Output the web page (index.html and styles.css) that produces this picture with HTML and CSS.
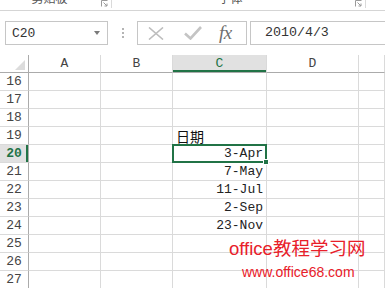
FILE: index.html
```html
<!DOCTYPE html>
<html lang="zh-CN">
  <head>
    <meta charset="UTF-8" />
    <title>日期</title>
    <link rel="stylesheet" href="styles.css">
  </head>
  <body>
    <div class="ribbon-tail">
      <div class="group group-clip">
        <span class="group-label">剪贴板</span>
        <svg class="launcher" width="7" height="7" viewBox="0 0 7 7">
          <path d="M0.5 6.5V0.5H6.5" fill="none" stroke="#9a9a9a" />
          <path d="M2.5 2.5L6 6M6 3.5V6H3.5" fill="none" stroke="#9a9a9a" />
        </svg>
      </div>
      <div class="group group-font">
        <span class="group-label">字体</span>
        <svg class="launcher" width="7" height="7" viewBox="0 0 7 7">
          <path d="M0.5 6.5V0.5H6.5" fill="none" stroke="#9a9a9a" />
          <path d="M2.5 2.5L6 6M6 3.5V6H3.5" fill="none" stroke="#9a9a9a" />
        </svg>
      </div>
    </div>

    <div class="formula-bar">
      <div class="name-box">
        <span>C20</span>
        <span class="caret"></span>
      </div>
      <div class="grip">
        <i></i><i></i><i></i>
      </div>
      <div class="fx-buttons">
        <svg class="btn-cancel" width="16" height="13" viewBox="0 0 16 13">
          <path d="M1 0.5L15 12.5M15 0.5L1 12.5" stroke="#bdbdbd" stroke-width="1.6" fill="none" />
        </svg>
        <svg class="btn-enter" width="18" height="14" viewBox="0 0 18 14">
          <path d="M1 7.5L6.5 12.5L17 1" stroke="#c4c4c4" stroke-width="2.6" fill="none" />
        </svg>
        <span class="fx">fx</span>
      </div>
      <div class="formula-input">2010/4/3</div>
    </div>

    <div class="sheet">
      <div class="grid">
        <div class="corner"><span class="corner-mark"></span></div>
        <div class="col-head">A</div>
        <div class="col-head">B</div>
        <div class="col-head is-active">C</div>
        <div class="col-head">D</div>
        <div class="col-head"></div>

        <div class="row-head">16</div><div class="cell"></div><div class="cell"></div><div class="cell"></div><div class="cell"></div><div class="cell"></div>
        <div class="row-head">17</div><div class="cell"></div><div class="cell"></div><div class="cell"></div><div class="cell"></div><div class="cell"></div>
        <div class="row-head">18</div><div class="cell"></div><div class="cell"></div><div class="cell"></div><div class="cell"></div><div class="cell"></div>
        <div class="row-head">19</div><div class="cell"></div><div class="cell"></div><div class="cell text">日期</div><div class="cell"></div><div class="cell"></div>
        <div class="row-head is-active">20</div><div class="cell"></div><div class="cell"></div><div class="cell date selected">3-Apr<span class="fill-handle"></span></div><div class="cell"></div><div class="cell"></div>
        <div class="row-head">21</div><div class="cell"></div><div class="cell"></div><div class="cell date">7-May</div><div class="cell"></div><div class="cell"></div>
        <div class="row-head">22</div><div class="cell"></div><div class="cell"></div><div class="cell date">11-Jul</div><div class="cell"></div><div class="cell"></div>
        <div class="row-head">23</div><div class="cell"></div><div class="cell"></div><div class="cell date">2-Sep</div><div class="cell"></div><div class="cell"></div>
        <div class="row-head">24</div><div class="cell"></div><div class="cell"></div><div class="cell date">23-Nov</div><div class="cell"></div><div class="cell"></div>
        <div class="row-head">25</div><div class="cell"></div><div class="cell"></div><div class="cell"></div><div class="cell"></div><div class="cell"></div>
        <div class="row-head">26</div><div class="cell"></div><div class="cell"></div><div class="cell"></div><div class="cell"></div><div class="cell"></div>
        <div class="row-head">27</div><div class="cell"></div><div class="cell"></div><div class="cell"></div><div class="cell"></div><div class="cell"></div>
      </div>

      <div class="watermark">
        <div class="wm-title">office教程学习网</div>
        <div class="wm-url">www.office68.com</div>
      </div>
    </div>
  </body>
</html>
```

FILE: styles.css
```css
:root {
  --excel-green: #217346;
  --grid-line: #dadada;
  --head-line: #ababab;
  --head-active: #e1e1e1;
  --text-color: #222;
  --mono: "Liberation Mono", "DejaVu Sans Mono", monospace;
}

* {
  box-sizing: border-box;
}

body {
  margin: 0;
  width: 385px;
  height: 288px;
  overflow: hidden;
  background-color: white;
  color: var(--text-color);
  font-family: "Liberation Sans", Arial, sans-serif;
}

/* bottom edge of the ribbon, labels cut off */
.ribbon-tail {
  display: flex;
  height: 11px;
  overflow: hidden;
  border-bottom: 1px solid #d5d5d5;
}

.group {
  position: relative;
  display: flex;
  justify-content: center;
  border-right: 1px solid #dadada;
  height: 8px;
}

.group-clip {
  width: 112px;
  padding-right: 12px;
}

.group-font {
  width: 254px;
  padding-right: 16px;
}

.group-label {
  margin-top: -9px;
  font-family: "Noto Sans CJK SC", sans-serif;
  font-size: 12px;
  line-height: 14px;
  color: #555;
}

.launcher {
  position: absolute;
  right: 3px;
  top: 0;
}

/* name box + formula */
.formula-bar {
  display: flex;
  align-items: flex-start;
  height: 44px;
  padding: 10px 0 0 5px;
}

.name-box {
  display: flex;
  align-items: center;
  justify-content: space-between;
  width: 103px;
  height: 24px;
  padding: 0 7px 0 6px;
  border: 1px solid #c6c6c6;
  font-family: var(--mono);
  font-size: 13px;
  color: #333;
}

.caret {
  width: 0;
  height: 0;
  border-left: 3.5px solid transparent;
  border-right: 3.5px solid transparent;
  border-top: 4px solid #7a7a7a;
}

.grip {
  display: flex;
  flex-direction: column;
  align-items: center;
  justify-content: center;
  gap: 2px;
  width: 29px;
  height: 24px;
}

.grip i {
  display: block;
  width: 2px;
  height: 2px;
  background-color: #b4b4b4;
}

.fx-buttons {
  display: flex;
  align-items: center;
  width: 110px;
  height: 24px;
  padding-left: 10px;
  border: 1px solid #c6c6c6;
}

.btn-cancel {
  margin-right: 20px;
}

.btn-enter {
  margin-right: 17px;
}

.fx {
  font-family: "Liberation Serif", "Times New Roman", serif;
  font-style: italic;
  font-size: 19px;
  color: #6e6e6e;
  letter-spacing: -0.5px;
}

.formula-input {
  flex: 1;
  height: 24px;
  margin-left: 3px;
  margin-right: -10px;
  padding-left: 14px;
  border: 1px solid #c6c6c6;
  font-family: var(--mono);
  font-size: 13.3px;
  line-height: 22px;
  color: #333;
}

/* worksheet */
.sheet {
  position: relative;
}

.grid {
  display: grid;
  grid-template-columns: 29px 72px 72px 94px 92px 1fr;
  grid-auto-rows: 18px;
}

.corner,
.col-head {
  border-bottom: 1px solid var(--head-line);
  border-right: 1px solid var(--grid-line);
}

.corner {
  position: relative;
  border-right-color: var(--head-line);
}

.corner-mark {
  position: absolute;
  right: 3px;
  bottom: 2px;
  width: 0;
  height: 0;
  border-left: 10px solid transparent;
  border-bottom: 10px solid #dcdcdc;
}

.col-head {
  text-align: center;
  font-family: var(--mono);
  font-size: 13px;
  line-height: 18px;
  color: #444;
}

.col-head.is-active {
  background-color: var(--head-active);
  box-shadow: inset 0 -2px 0 var(--excel-green);
  color: var(--excel-green);
}

.row-head {
  border-right: 1px solid var(--head-line);
  border-bottom: 1px solid var(--grid-line);
  text-align: center;
  font-family: var(--mono);
  font-size: 13px;
  line-height: 18px;
  color: #444;
}

.row-head.is-active {
  background-color: var(--head-active);
  box-shadow: inset -2px 0 0 var(--excel-green);
  color: var(--excel-green);
  font-weight: bold;
}

.cell {
  border-right: 1px solid var(--grid-line);
  border-bottom: 1px solid var(--grid-line);
  font-size: 13px;
  line-height: 17px;
}

.cell.text {
  padding-left: 3px;
  font-family: "Noto Sans CJK SC", sans-serif;
  font-size: 14px;
  line-height: 18px;
  color: #111;
}

.cell.date {
  padding-right: 3px;
  text-align: right;
  font-family: var(--mono);
  color: #222;
}

.cell.selected {
  position: relative;
}

.cell.selected::after {
  content: "";
  position: absolute;
  top: -1px;
  left: -1px;
  right: -1px;
  bottom: -1px;
  border: 2px solid var(--excel-green);
}

.fill-handle {
  position: absolute;
  right: -3px;
  bottom: -3px;
  width: 6px;
  height: 6px;
  background-color: var(--excel-green);
  border: 1px solid white;
  z-index: 1;
}

.watermark {
  position: absolute;
  left: 229px;
  top: 185px;
  color: #e8202a;
  line-height: 1;
}

.wm-title {
  font-family: "Liberation Sans", "Noto Sans CJK SC", sans-serif;
  font-size: 18.5px;
}

.wm-url {
  margin: 6px 0 0 13px;
  font-family: "Liberation Sans", Arial, sans-serif;
  font-size: 14px;
}
```
